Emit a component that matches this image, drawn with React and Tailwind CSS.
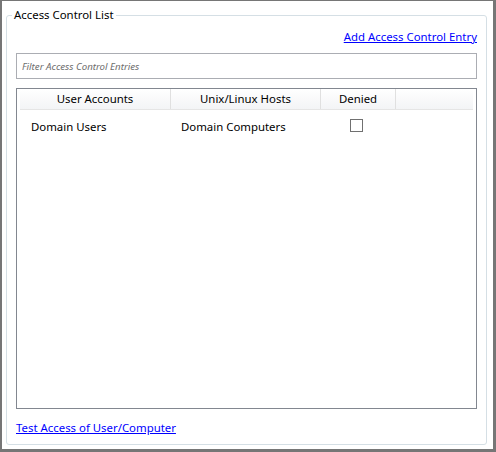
import React, { useState } from "react"

const rows = [{ user: "Domain Users", host: "Domain Computers", denied: false }]

export default function App() {
  const [filter, setFilter] = useState("")

  return (
    <div
      className="w-[496px] h-[452px] bg-white border-t border-l-2 border-r-[3px] border-b-[3px] border-[#767676] flex flex-col text-[11.4px] text-black"
      style={{ fontFamily: '"Noto Sans", "Open Sans", sans-serif' }}>
      {/* Group box */}
      <fieldset className="flex-1 mt-[6px] ml-[4px] mr-[6px] mb-[4px] border border-[#d5dfe5] rounded-[3px] px-[9px] pb-[8px] flex flex-col min-h-0">
        <legend className="-ml-[4px] px-[2px] leading-[16px]">Access Control List</legend>

        <div className="flex justify-end mt-[6px] leading-[16px]">
          <a href="#" className="text-[#0000ff] underline">
            Add Access Control Entry
          </a>
        </div>

        {/* Filter */}
        <input
          className="mt-[8px] h-[26px] w-full border border-[#abadb3] px-[5px] text-[9.7px] italic placeholder:text-[#6d6d6d] focus:outline-0"
          type="text"
          placeholder="Filter Access Control Entries"
          value={filter}
          onChange={(e) => setFilter(e.target.value)}
        />

        {/* List view */}
        <div className="mt-[9px] flex-1 border border-[#828790] flex flex-col min-h-0">
          <div className="ml-[3px] mr-[3px] h-[21px] flex border-b border-[#e5e5e5] bg-gradient-to-b from-white to-[#f3f4f6]">
            <div className="w-[151px] border-r border-[#e0e0e0] flex items-center justify-center">User Accounts</div>
            <div className="w-[150px] border-r border-[#e0e0e0] flex items-center justify-center">Unix/Linux Hosts</div>
            <div className="w-[75px] border-r border-[#e0e0e0] flex items-center justify-center">Denied</div>
            <div className="flex-1" />
          </div>
          {rows.map((row, key) => (
            <div key={key} className="ml-[3px] h-[31px] flex items-center">
              <div className="w-[151px] pl-[11px] pt-[2px]">{row.user}</div>
              <div className="w-[150px] pl-[10px] pt-[2px]">{row.host}</div>
              <div className="w-[75px] flex justify-center pr-[4px]">
                <div className="w-[13px] h-[13px] border border-[#707070] bg-white" />
              </div>
            </div>
          ))}
        </div>

        <div className="mt-[11px] leading-[16px]">
          <a href="#" className="text-[#0000ff] underline">
            Test Access of User/Computer
          </a>
        </div>
      </fieldset>
    </div>
  )
}
